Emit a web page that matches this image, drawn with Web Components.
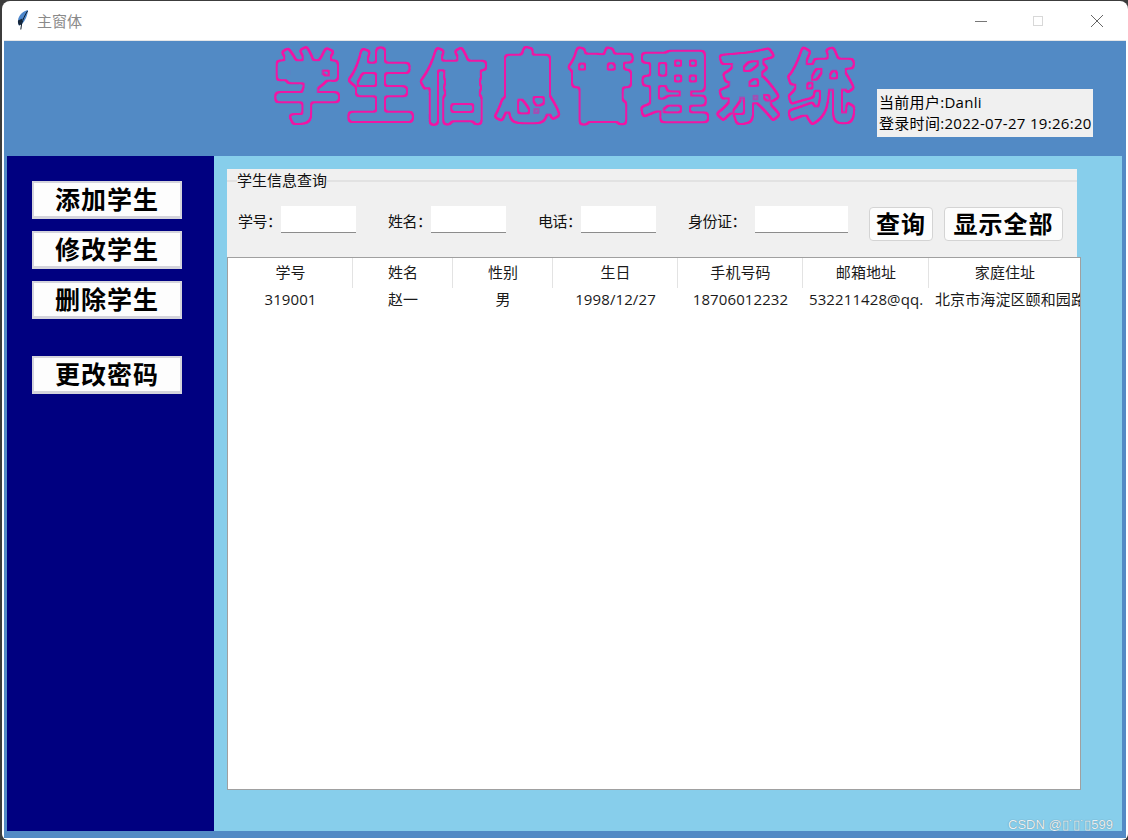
<!DOCTYPE html>
<html lang="zh">
<head>
<meta charset="utf-8">
<title>主窗体</title>
<style>
  html, body { margin: 0; height: 100%; background: #3c3c3c; overflow: hidden; }
  body { font: 15px/1.2 "Open Sans", "Noto Sans CJK SC", sans-serif; color: #111; }
</style>
</head>
<body>
<app-window>
  <title-bar slot="bar" caption="主窗体"></title-bar>
  <banner-head slot="head" user="Danli" time="2022-07-27 19:26:20">学生信息管理系统</banner-head>
  <side-nav slot="nav">
    <nav-button>添加学生</nav-button>
    <nav-button>修改学生</nav-button>
    <nav-button>删除学生</nav-button>
    <nav-button class="apart">更改密码</nav-button>
  </side-nav>
  <query-panel slot="query"></query-panel>
  <student-table slot="table"></student-table>
  <csdn-mark slot="mark"></csdn-mark>
</app-window>

<script>
class AppWindow extends HTMLElement {
  connectedCallback() {
    this.attachShadow({ mode: 'open' });
    this.shadowRoot.innerHTML = `
      <style>
        :host {
          display: flex;
          flex-direction: column;
          box-sizing: border-box;
          width: 1126px;
          height: 839px;
          margin: 1px 0 0 2px;
          background: #fff;
          border-radius: 8px 8px 6px 6px;
          overflow: hidden;
        }
        .client {
          flex: 1;
          display: flex;
          flex-direction: column;
          min-height: 0;
          margin: 0 2px 2px 2px;
          background: #528ac5;
          border-top: 1px solid #e4e6e8;
        }
        .body {
          flex: 1;
          display: flex;
          min-height: 0;
          margin: 0 4px 7px 3px;
        }
        .content {
          flex: 1;
          background: #87ceeb;
          padding: 13px 41px 41px 13px;
          display: flex;
          flex-direction: column;
          min-width: 0;
          position: relative;
        }
      </style>
      <slot name="bar"></slot>
      <div class="client">
        <slot name="head"></slot>
        <div class="body">
          <slot name="nav"></slot>
          <div class="content">
            <slot name="query"></slot>
            <slot name="table"></slot>
            <slot name="mark"></slot>
          </div>
        </div>
      </div>
    `;
  }
}

class TitleBar extends HTMLElement {
  connectedCallback() {
    this.attachShadow({ mode: 'open' });
    this.shadowRoot.innerHTML = `
      <style>
        :host {
          display: flex;
          align-items: center;
          height: 39px;
          flex: none;
          padding: 0 2px 0 15px;
          font: 15px "Noto Sans CJK SC", sans-serif;
          color: #8a8a8a;
        }
        .icon { width: 13px; height: 22px; margin-right: 7px; margin-top: -1px; }
        .ctrls { margin-left: auto; display: flex; }
        .ctrls button {
          all: unset;
          width: 58px;
          height: 39px;
          display: flex;
          align-items: center;
          justify-content: center;
        }
        .ctrls button:nth-child(2) svg { margin-right: 2px; }
      </style>
      <svg class="icon" viewBox="0 0 13 22">
        <path d="M11 1C6.500 2 1.500 6 1 11.500 .8 13.500 1.200 15 2 16.500L5 15C8 12 10.500 7 11 1Z" fill="#4d87cc"/>
        <path d="M1 11.500C.8 13.500 1.200 15 2 16.500L4.500 15.200 5.500 9.500Z" fill="#16263a"/>
        <path d="M10.500 2C8 6 5.800 10.500 4.600 15L3.800 20.500" fill="none" stroke="#0e1c2c" stroke-width="1"/>
      </svg>
      <span>${this.getAttribute('caption')}</span>
      <div class="ctrls">
        <button aria-label="min"><svg width="12" height="12"><path d="M0 6.500H12" stroke="#777"/></svg></button>
        <button aria-label="max"><svg width="12" height="12"><rect x="1.500" y="1.500" width="9" height="9" fill="none" stroke="#d8d8d8"/></svg></button>
        <button aria-label="close"><svg width="14" height="14"><path d="M1 1L13 13M13 1L1 13" stroke="#666"/></svg></button>
      </div>
    `;
  }
}

class BannerHead extends HTMLElement {
  connectedCallback() {
    const text = this.textContent;
    this.attachShadow({ mode: 'open' });
    this.shadowRoot.innerHTML = `
      <style>
        :host {
          display: flex;
          align-items: flex-start;
          height: 115px;
          flex: none;
          padding-left: 262px;
        }
        svg { width: 610px; height: 100px; flex: none; overflow: visible; }
        text {
          font: 400 68px "Noto Sans CJK SC", sans-serif;
          letter-spacing: 5.500px;
          fill: #000;
          stroke: #000;
          stroke-width: 5px;
          stroke-linejoin: round;
        }
        .who {
          margin: 48px 0 0 1px;
          width: 216px;
          height: 48px;
          box-sizing: border-box;
          padding: 3px 0 0 2px;
          background: #f0f0f0;
          font: 15px/21px "Open Sans", "Noto Sans CJK SC", sans-serif;
          letter-spacing: .3px;
          color: #000;
          white-space: nowrap;
          overflow: hidden;
        }
      </style>
      <svg viewBox="0 0 610 100">
        <defs>
          <filter id="ring" x="-5%" y="-10%" width="110%" height="120%">
            <feGaussianBlur in="SourceAlpha" stdDeviation="1.500"/>
            <feComponentTransfer result="shape">
              <feFuncA type="linear" slope="6" intercept="-2"/>
            </feComponentTransfer>
            <feMorphology in="shape" operator="erode" radius="2" result="thin"/>
            <feFlood flood-color="#ee18a4"/>
            <feComposite in2="shape" operator="in"/>
            <feComposite in2="thin" operator="out"/>
          </filter>
        </defs>
        <text x="7" y="64.500" transform="scale(1 1.160)" filter="url(#ring)">${text}</text>
      </svg>
      <div class="who">当前用户:${this.getAttribute('user')}<br>登录时间:${this.getAttribute('time')}</div>
    `;
  }
}

class SideNav extends HTMLElement {
  connectedCallback() {
    this.attachShadow({ mode: 'open' });
    this.shadowRoot.innerHTML = `
      <style>
        :host {
          display: flex;
          flex-direction: column;
          gap: 12px;
          box-sizing: border-box;
          width: 207px;
          flex: none;
          padding: 25px 0 0 25px;
          background: #000080;
        }
        ::slotted(.apart) { margin-top: 25px; }
      </style>
      <slot></slot>
    `;
  }
}

class NavButton extends HTMLElement {
  connectedCallback() {
    this.attachShadow({ mode: 'open' });
    this.shadowRoot.innerHTML = `
      <style>
        :host {
          display: flex;
          align-items: center;
          justify-content: center;
          box-sizing: border-box;
          width: 150px;
          height: 38px;
          padding-bottom: 3px;
          background: #fdfdfd;
          border: 2px solid #d4d4dc;
          border-bottom-width: 3px;
          font: 700 25px "Liberation Serif", "Noto Sans CJK SC", serif;
          letter-spacing: 1px;
          color: #000;
        }
      </style>
      <slot></slot>
    `;
  }
}

class QueryPanel extends HTMLElement {
  connectedCallback() {
    this.attachShadow({ mode: 'open' });
    const fields = [['学号：', 43, 75], ['姓名：', 43, 75], ['电话：', 43, 75], ['身份证：', 67, 93]];
    this.shadowRoot.innerHTML = `
      <style>
        :host {
          display: block;
          box-sizing: border-box;
          width: 850px;
          height: 88px;
          flex: none;
          background: #f0f0f0;
          position: relative;
          font: 15px "Noto Sans CJK SC", sans-serif;
          color: #111;
        }
        .rule { border-bottom: 2px solid #e2e2e2; box-sizing: border-box; height: 13px; }
        .legend {
          position: absolute;
          left: 10px;
          top: 1px;
          background: #f0f0f0;
          line-height: 20px;
        }
        .row {
          display: flex;
          align-items: flex-start;
          padding: 24px 0 0 11px;
        }
        .field { display: flex; align-items: center; height: 27px; margin-right: 32px; }
        .field.last { margin-right: 21px; }
        .field span { flex: none; padding-top: 2px; white-space: nowrap; letter-spacing: -.5px; }
        .input {
          flex: none;
          height: 27px;
          box-sizing: border-box;
          background: #fff;
          border-bottom: 1px solid #8c8c8c;
        }
        .btn {
          box-sizing: border-box;
          height: 34px;
          margin-top: 1px;
          padding-bottom: 3px;
          display: flex;
          align-items: center;
          justify-content: center;
          background: #fdfdfd;
          border: 1px solid #d4d4d4;
          border-radius: 4px;
          font: 700 24px "Liberation Serif", "Noto Sans CJK SC", serif;
          letter-spacing: 1px;
          color: #000;
        }
      </style>
      <div class="rule"></div>
      <div class="legend">学生信息查询</div>
      <div class="row">
        ${fields.map((f, i) => `
          <div class="field ${i == 3 ? 'last' : ''}">
            <span style="width:${f[1]}px">${f[0]}</span>
            <div class="input" style="width:${f[2]}px"></div>
          </div>`).join('')}
        <div class="btn" style="width:64px;margin-right:11px">查询</div>
        <div class="btn" style="width:119px">显示全部</div>
      </div>
    `;
  }
}

class StudentTable extends HTMLElement {
  connectedCallback() {
    this.attachShadow({ mode: 'open' });
    const head = ['学号', '姓名', '性别', '生日', '手机号码', '邮箱地址', '家庭住址'];
    const row = ['319001', '赵一', '男', '1998/12/27', '18706012232', '532211428@qq.', '北京市海淀区颐和园路'];
    this.shadowRoot.innerHTML = `
      <style>
        :host {
          display: block;
          box-sizing: border-box;
          width: 854px;
          height: 533px;
          flex: none;
          background: #fff;
          border: 1px solid #a0a0a0;
          font: 15px "Open Sans", "Noto Sans CJK SC", sans-serif;
          letter-spacing: .1px;
          color: #1a1a1a;
          overflow: hidden;
        }
        .grid {
          display: grid;
          grid-template-columns: 125px 100px 100px 125px 125px 126px 152px;
        }
        .cell {
          height: 30px;
          display: flex;
          align-items: center;
          justify-content: center;
          overflow: hidden;
          white-space: nowrap;
        }
        .th { box-shadow: inset -1px 0 0 #e3e3e3; padding-bottom: 4px; box-sizing: border-box; }
        .th:nth-child(7) { box-shadow: none; }
        .td { height: 24px; padding-bottom: 3px; box-sizing: border-box; }
        .td.clip { justify-content: flex-start; padding-left: 6px; }
      </style>
      <div class="grid">
        ${head.map(h => `<div class="cell th">${h}</div>`).join('')}
        ${row.map((d, i) => `<div class="cell td ${i > 4 ? 'clip' : ''}">${d}</div>`).join('')}
      </div>
    `;
  }
}

class CsdnMark extends HTMLElement {
  connectedCallback() {
    this.attachShadow({ mode: 'open' });
    this.shadowRoot.innerHTML = `
      <style>
        :host {
          position: absolute;
          right: 9px;
          bottom: -1px;
          font: 13px "Liberation Sans", sans-serif;
          color: #e9f1f6;
          text-shadow: 0 0 1px #54707f;
        }
      </style>
      CSDN @▯˙▯˙▯599
    `;
  }
}

customElements.define('app-window', AppWindow);
customElements.define('title-bar', TitleBar);
customElements.define('banner-head', BannerHead);
customElements.define('side-nav', SideNav);
customElements.define('nav-button', NavButton);
customElements.define('query-panel', QueryPanel);
customElements.define('student-table', StudentTable);
customElements.define('csdn-mark', CsdnMark);
</script>
</body>
</html>
